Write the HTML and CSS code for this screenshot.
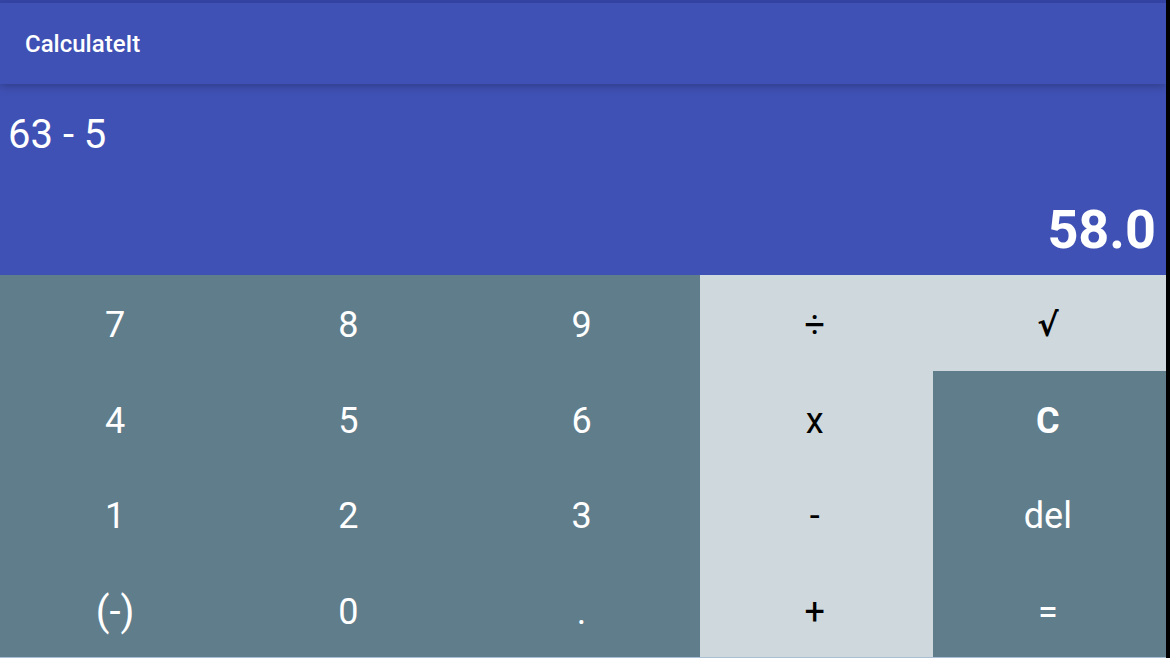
FILE: index.html
```html
<!DOCTYPE html>
<html>
<head>
<meta charset="utf-8">
<link rel="stylesheet" href="styles.css">
</head>
<body>
<div class="screen">
  <div class="status"></div>
  <header class="appbar"><span class="title">CalculateIt</span></header>
  <section class="display">
    <div class="expr">63 - 5</div>
    <div class="result">58.0</div>
  </section>
  <section class="keypad">
    <div class="key dark">7</div>
    <div class="key dark">8</div>
    <div class="key dark">9</div>
    <div class="key light">÷</div>
    <div class="key light sqrt">√</div>
    <div class="key dark">4</div>
    <div class="key dark">5</div>
    <div class="key dark">6</div>
    <div class="key light">x</div>
    <div class="key dark bold">C</div>
    <div class="key dark">1</div>
    <div class="key dark">2</div>
    <div class="key dark">3</div>
    <div class="key light">-</div>
    <div class="key dark">del</div>
    <div class="key dark neg">(-)</div>
    <div class="key dark">0</div>
    <div class="key dark">.</div>
    <div class="key light">+</div>
    <div class="key dark">=</div>
  </section>
</div>
</body>
</html>
```
FILE: styles.css
```css
html, body {
  margin: 0;
  padding: 0;
  background: #000;
  overflow: hidden;
}
body {
  width: 1170px;
  height: 658px;
  font-family: Roboto, "Liberation Sans", sans-serif;
}
.screen {
  width: 1166px;
  height: 658px;
  display: flex;
  flex-direction: column;
  background: #a9c0d4;
}
.status {
  height: 3px;
  background: #3545a6;
}
.appbar {
  height: 81px;
  background: #3f51b5;
  display: flex;
  align-items: center;
  padding-left: 25px;
  position: relative;
  z-index: 2;
  box-shadow: 0 3px 8px rgba(0, 0, 0, 0.22);
}
.title {
  color: #fff;
  font-size: 24px;
  font-weight: 500;
  margin-top: 1px;
}
.display {
  height: 191px;
  background: #3f51b5;
  color: #fff;
  display: flex;
  flex-direction: column;
  justify-content: space-between;
  padding: 27px 10px 14px 8px;
  box-sizing: border-box;
}
.expr {
  font-size: 40px;
  line-height: 47px;
}
.result {
  text-align: right;
  font-size: 54px;
  line-height: 63px;
  font-weight: 700;
}
.keypad {
  display: grid;
  grid-template-columns: repeat(5, 1fr);
  grid-template-rows: repeat(4, 95.5px);
}
.key {
  display: flex;
  align-items: center;
  justify-content: center;
  font-size: 36px;
  padding-top: 5px;
  padding-right: 3px;
}
.dark {
  background: #607d8b;
  color: #fff;
}
.light {
  background: #cfd8dc;
  color: #000;
}
.bold {
  font-weight: 700;
}
.sqrt {
  font-family: "DejaVu Sans", sans-serif;
  font-weight: 700;
  font-size: 32px;
}
.neg {
  font-size: 40px;
}
```
